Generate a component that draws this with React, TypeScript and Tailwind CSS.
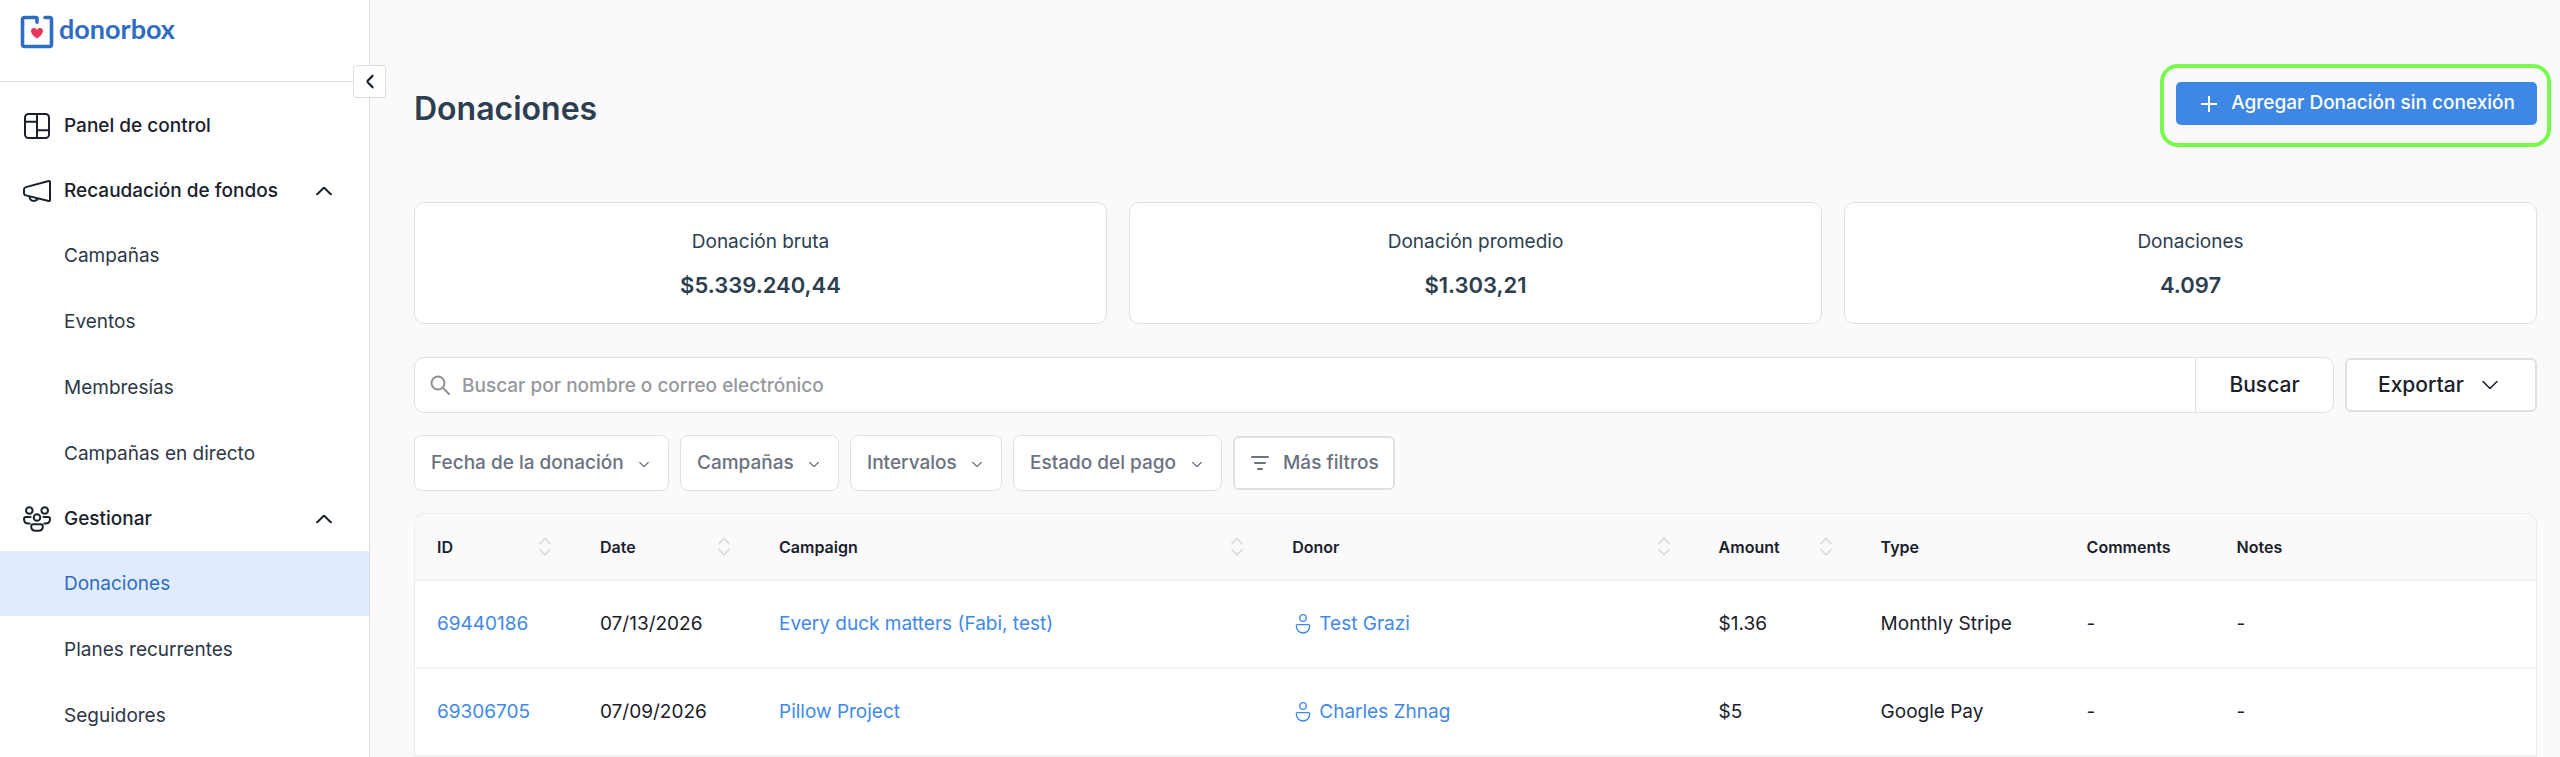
import React, { useState, ChangeEvent } from "react";

type NavItem = {
  label: string;
  active?: boolean;
};

type Stat = {
  label: string;
  value: string;
};

type Column = {
  label: string;
  width: string;
  sortable?: boolean;
};

type Donation = {
  id: string;
  date: string;
  campaign: string;
  donor: string;
  amount: string;
  type: string;
  comments: string;
  notes: string;
};

const fundraisingItems: NavItem[] = [
  { label: "Campañas" },
  { label: "Eventos" },
  { label: "Membresías" },
  { label: "Campañas en directo" },
];

const manageItems: NavItem[] = [
  { label: "Donaciones", active: true },
  { label: "Planes recurrentes" },
  { label: "Seguidores" },
];

const stats: Stat[] = [
  { label: "Donación bruta", value: "$5.339.240,44" },
  { label: "Donación promedio", value: "$1.303,21" },
  { label: "Donaciones", value: "4.097" },
];

const filters: string[] = ["Fecha de la donación", "Campañas", "Intervalos", "Estado del pago"];

const columns: Column[] = [
  { label: "ID", width: "w-[163px]", sortable: true },
  { label: "Date", width: "w-[179px]", sortable: true },
  { label: "Campaign", width: "w-[24.2%]", sortable: true },
  { label: "Donor", width: "w-[20.1%]", sortable: true },
  { label: "Amount", width: "w-[162px]", sortable: true },
  { label: "Type", width: "w-[206px]" },
  { label: "Comments", width: "w-[150px]" },
  { label: "Notes", width: "w-auto" },
];

const donations: Donation[] = [
  {
    id: "69440186",
    date: "07/13/2026",
    campaign: "Every duck matters (Fabi, test)",
    donor: "Test Grazi",
    amount: "$1.36",
    type: "Monthly Stripe",
    comments: "-",
    notes: "-",
  },
  {
    id: "69306705",
    date: "07/09/2026",
    campaign: "Pillow Project",
    donor: "Charles Zhnag",
    amount: "$5",
    type: "Google Pay",
    comments: "-",
    notes: "-",
  },
];

const Chevron = ({ className }: { className: string }) => (
  <svg viewBox="0 0 16 8" fill="none" stroke="currentColor" strokeLinecap="round" strokeLinejoin="round" className={className} aria-hidden="true">
    <path d="M1 0.500l7 7 7-7" />
  </svg>
);

const DashboardIcon = () => (
  <svg viewBox="0 0 28 28" fill="none" stroke="currentColor" strokeWidth="2" className="size-7" aria-hidden="true">
    <rect x="2" y="2" width="24" height="24" rx="3.5" />
    <path d="M14 2v24M2 9.8h12M14 18.2h12" />
  </svg>
);

const MegaphoneIcon = () => (
  <svg viewBox="0 0 28 28" fill="none" stroke="currentColor" strokeWidth="2" strokeLinejoin="round" className="size-7" aria-hidden="true">
    <path d="M27 5v18a1 1 0 0 1-1.300 1L3 18.400A2.600 2.600 0 0 1 1 15.900v-3.300A2.600 2.600 0 0 1 2.900 10.100L25.700 4A1 1 0 0 1 27 5z" />
    <path d="M6.500 19.300c.2 2.800 2 4.600 4.300 4.600 2.100 0 3.700-1.200 4.300-2.700" />
  </svg>
);

const PeopleIcon = () => (
  <svg viewBox="0 0 28 28" fill="none" stroke="currentColor" strokeWidth="2" strokeLinecap="round" strokeLinejoin="round" className="size-7" aria-hidden="true">
    <circle cx="6.300" cy="5.500" r="3.300" />
    <circle cx="21.700" cy="5.500" r="3.300" />
    <circle cx="14" cy="12.500" r="3.300" />
    <path d="M7.500 12H3a2 2 0 0 0-2 2c0 2.700 1.800 4.500 4.500 4.500h1.200" />
    <path d="M20.500 12H25a2 2 0 0 1 2 2c0 2.700-1.800 4.500-4.500 4.500h-1.200" />
    <path d="M10.200 19.200h7.600a2 2 0 0 1 2 2c0 3-1.800 4.600-4.500 4.600h-2.600c-2.700 0-4.500-1.600-4.500-4.600a2 2 0 0 1 2-2z" />
  </svg>
);

const PersonIcon = () => (
  <svg viewBox="0 0 16 22" fill="none" stroke="currentColor" strokeWidth="1.300" strokeLinejoin="round" className="h-[22px] w-4" aria-hidden="true">
    <circle cx="8" cy="5" r="3.300" />
    <path d="M2.300 11.700h11.400a1 1 0 0 1 1 1c0 4.300-2.800 7.300-6.700 7.300s-6.700-3-6.700-7.300a1 1 0 0 1 1-1z" />
  </svg>
);

const SortIcon = () => (
  <svg viewBox="0 0 22 22" fill="none" stroke="#d9dbde" strokeWidth="1.700" className="size-[22px]" aria-hidden="true">
    <path d="M5.500 8.200L11 2.500l5.500 5.700M5.500 13.200L11 18.900l5.500-5.700" />
  </svg>
);

const Logo = () => (
  <a href="#" className="flex items-start gap-[5px] text-[#2f6cc4]">
    <svg viewBox="0 0 34 34" fill="none" className="size-[34px]" aria-hidden="true">
      <path d="M17 7.300V3.500a1 1 0 0 0-1-1H4.500a2 2 0 0 0-2 2v25a2 2 0 0 0 2 2h25a2 2 0 0 0 2-2v-25a2 2 0 0 0-2-2H25" stroke="currentColor" strokeWidth="3.600" strokeLinecap="round" />
      <path d="M17 23.500c-3.400-2.600-6-4.700-6-7.300 0-3.600 4.300-4.200 6-1.300 1.700-2.900 6-2.300 6 1.300 0 2.600-2.600 4.700-6 7.300z" fill="#e8385f" />
    </svg>
    <span className="font-[Lato] text-[27px] leading-7 font-bold">donorbox</span>
  </a>
);

const NavGroup = ({ title, icon, items }: { title: string; icon: React.ReactNode; items: NavItem[] }) => {
  const [open, setOpen] = useState(true);

  return (
    <li>
      <button type="button" aria-expanded={open} onClick={() => setOpen(!open)} className="flex h-[65px] w-full items-center pr-[37px] pl-[23px] text-left font-medium">
        {icon}
        <span className="ml-[13px] flex-1">{title}</span>
        <Chevron className={open ? "h-2 w-4 rotate-180 stroke-2" : "h-2 w-4 stroke-2"} />
      </button>
      {open && (
        <ul className="flex flex-col gap-px">
          {items.map((item) => (
            <li key={item.label}>
              <a
                href="#"
                aria-current={item.active ? "page" : undefined}
                className={
                  item.active
                    ? "flex h-[65px] items-center bg-[#e1ebfe] pl-16 text-[#2f6bc4]"
                    : "flex h-[65px] items-center pl-16 text-[#2d3748]"
                }
              >
                {item.label}
              </a>
            </li>
          ))}
        </ul>
      )}
    </li>
  );
};

const Sidebar = () => (
  <aside className="relative w-[370px] shrink-0 border-r border-[#dcdde0] bg-white">
    <div className="h-[82px] border-b border-[#dcdde0] pt-[15px] pl-5">
      <Logo />
    </div>
    <button
      type="button"
      aria-label="Contraer menú"
      className="absolute top-[65px] -right-[17px] flex size-[33px] items-center justify-center rounded-[3px] border border-[#dcdde0] bg-white"
    >
      <Chevron className="h-[7px] w-3.5 rotate-90 stroke-[2.500]" />
    </button>
    <nav className="pt-[11px] text-[19px] leading-7">
      <ul>
        <li>
          <a href="#" className="flex h-[65px] items-center pl-[23px] font-medium">
            <DashboardIcon />
            <span className="ml-[13px]">Panel de control</span>
          </a>
        </li>
        <NavGroup title="Recaudación de fondos" icon={<MegaphoneIcon />} items={fundraisingItems} />
        <NavGroup title="Gestionar" icon={<PeopleIcon />} items={manageItems} />
      </ul>
    </nav>
  </aside>
);

const Toolbar = () => {
  const [searchQuery, setSearchQuery] = useState("");

  const handleSearchChange = (event: ChangeEvent<HTMLInputElement>) => {
    setSearchQuery(event.target.value);
  };

  return (
    <>
      <div className="mt-[33px] flex items-center gap-[11px]">
        <form className="flex h-14 flex-1 rounded-[10px] border border-[#dfe0e4] bg-white">
          <label className="flex flex-1 items-center gap-3 pl-[15px] text-[#8d9095]">
            <svg viewBox="0 0 20 20" fill="none" stroke="currentColor" strokeWidth="2" strokeLinecap="round" className="size-5" aria-hidden="true">
              <circle cx="8" cy="8" r="6.500" />
              <path d="M13 13l6 6" />
            </svg>
            <input
              type="text"
              aria-label="Buscar por nombre o correo electrónico"
              placeholder="Buscar por nombre o correo electrónico"
              value={searchQuery}
              onChange={handleSearchChange}
              className="h-full flex-1 text-[19px] font-medium text-[#1f2937] outline-none placeholder:text-[#96989c]"
            />
          </label>
          <button type="submit" className="w-[138px] border-l border-[#dfe0e4] text-[21px] font-medium">
            Buscar
          </button>
        </form>
        <button type="button" aria-haspopup="menu" className="flex h-[54px] w-48 items-center gap-[18px] rounded-md border-2 border-[#dfe0e4] bg-white pl-[31px] text-[21px] font-medium">
          Exportar
          <Chevron className="h-2 w-4 stroke-[1.500]" />
        </button>
      </div>
      <div className="mt-[22px] flex items-center gap-[11px] text-[19px] font-medium text-[#6b7280]">
        {filters.map((filter) => (
          <div key={filter} className="relative">
            <select aria-label={filter} className="h-14 appearance-none rounded-lg border border-[#dfe0e4] bg-white pr-11 pl-4">
              <option>{filter}</option>
            </select>
            <Chevron className="pointer-events-none absolute top-[27px] right-5 h-[5px] w-2.5 stroke-2" />
          </div>
        ))}
        <button type="button" className="flex h-[54px] items-center gap-3.5 rounded-md border-2 border-[#dfe0e4] bg-white pr-3.5 pl-4">
          <svg viewBox="0 0 18 16" fill="none" stroke="currentColor" strokeWidth="2" strokeLinecap="round" className="h-4 w-[18px]" aria-hidden="true">
            <path d="M1 2h16M4 8h10M7 14h4" />
          </svg>
          Más filtros
        </button>
      </div>
    </>
  );
};

const DonationsTable = () => (
  <div className="mt-[22px] overflow-hidden rounded-t-[10px] border border-b-0 border-[#ececef]">
    <table className="w-full table-fixed text-left text-[19px]">
      <thead>
        <tr className="h-[66px] border-b-2 border-[#efeff1]">
          {columns.map((column) => (
            <th key={column.label} scope="col" className={`${column.width} px-[22px] text-base font-semibold`}>
              <div className="flex items-center justify-between">
                {column.label}
                {column.sortable && <SortIcon />}
              </div>
            </th>
          ))}
        </tr>
      </thead>
      <tbody className="bg-white">
        {donations.map((row) => (
          <tr key={row.id} className="h-[88px] border-b-2 border-[#f3f3f4]">
            <td className="px-[22px] text-[#4189e8]">
              <a href="#">{row.id}</a>
            </td>
            <td className="px-[22px]">{row.date}</td>
            <td className="px-[22px] text-[#4189e8]">
              <a href="#">{row.campaign}</a>
            </td>
            <td className="px-[22px] text-[#4189e8]">
              <a href="#" className="flex items-center gap-2 pl-[3px]">
                <PersonIcon />
                {row.donor}
              </a>
            </td>
            <td className="px-[22px]">{row.amount}</td>
            <td className="px-[22px]">{row.type}</td>
            <td className="px-[22px]">{row.comments}</td>
            <td className="px-[22px]">{row.notes}</td>
          </tr>
        ))}
      </tbody>
    </table>
  </div>
);

export default function App() {
  return (
    <div className="flex min-h-screen bg-[#fafafb] font-[Inter,sans-serif] text-[#1a202c]">
      <Sidebar />
      <main className="min-w-0 flex-1 pt-[82px] pr-[23px] pl-11">
        <header className="flex items-start justify-between">
          <h1 className="text-[32px] leading-[54px] font-semibold text-[#2c3e50]">Donaciones</h1>
          <div className="relative">
            <button type="button" className="flex h-[43px] items-center gap-[13px] rounded-[5px] bg-[#3f87e5] pr-[22px] pl-6 text-[19px] font-medium text-white">
              <svg viewBox="0 0 18 18" fill="none" stroke="currentColor" strokeWidth="2" className="size-[18px]" aria-hidden="true">
                <path d="M9 1v16M1 9h16" />
              </svg>
              Agregar Donación sin conexión
            </button>
            <span className="pointer-events-none absolute -top-[18px] -right-3.5 -bottom-[22px] -left-4 rounded-[18px] border-4 border-[#78fa4c]" />
          </div>
        </header>
        <section className="mt-[66px] grid grid-cols-3 gap-[22px]">
          {stats.map((stat) => (
            <div key={stat.label} className="flex h-[122px] flex-col items-center justify-center gap-[13px] rounded-[10px] border border-[#dfe0e4] bg-white text-[#2c3e50]">
              <p className="text-[19px] leading-[30px]">{stat.label}</p>
              <p className="text-[22px] leading-[30px] font-semibold">{stat.value}</p>
            </div>
          ))}
        </section>
        <Toolbar />
        <DonationsTable />
      </main>
    </div>
  );
}
